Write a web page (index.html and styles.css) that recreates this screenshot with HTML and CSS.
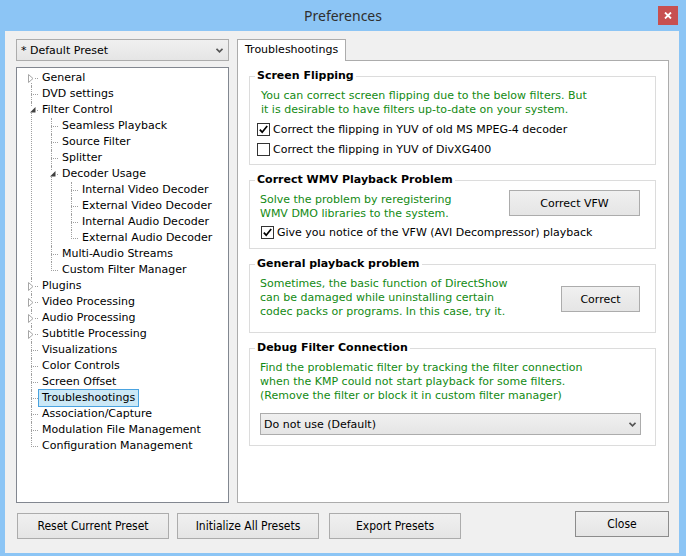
FILE: index.html
```html
<!DOCTYPE html>
<html>
<head>
<meta charset="utf-8">
<title>Preferences</title>
<link rel="stylesheet" href="styles.css">
</head>
<body>
<div class="window">
  <div class="titlebar">
    <span class="title">Preferences</span>
    <div class="close-x">
      <svg width="8" height="7" viewBox="0 0 8 7"><path d="M1 0.5 L7 6.5 M7 0.5 L1 6.5" stroke="#fff" stroke-width="1.8" fill="none"/></svg>
    </div>
  </div>
  <div class="client">
    <div class="main">
      <div class="left">
        <div class="combo">
          <span>* Default Preset</span>
          <svg class="chev" width="7" height="5" viewBox="0 0 7 5"><path d="M0.5 0.8 L3.5 3.8 L6.5 0.8" stroke="#555" stroke-width="1.7" fill="none"/></svg>
        </div>
        <div class="tree">
          <ul>
            <li><div class="row"><span class="exp col"><svg width="6" height="9" viewBox="0 0 6 9"><path d="M0.5 0.5 L5 4.5 L0.5 8.5 Z" stroke="#a6a6a6" fill="#fff"/></svg></span><span class="lbl">General</span></div></li>
            <li><div class="row"><span class="lbl">DVD settings</span></div></li>
            <li><div class="row"><span class="exp ex"><svg width="6" height="6" viewBox="0 0 6 6"><path d="M5.5 0 L5.5 5.5 L0 5.5 Z" fill="#404040"/></svg></span><span class="lbl">Filter Control</span></div>
              <ul>
                <li><div class="row"><span class="lbl">Seamless Playback</span></div></li>
                <li><div class="row"><span class="lbl">Source Filter</span></div></li>
                <li><div class="row"><span class="lbl">Splitter</span></div></li>
                <li><div class="row"><span class="exp ex"><svg width="6" height="6" viewBox="0 0 6 6"><path d="M5.5 0 L5.5 5.5 L0 5.5 Z" fill="#404040"/></svg></span><span class="lbl">Decoder Usage</span></div>
                  <ul>
                    <li><div class="row"><span class="lbl">Internal Video Decoder</span></div></li>
                    <li><div class="row"><span class="lbl">External Video Decoder</span></div></li>
                    <li><div class="row"><span class="lbl">Internal Audio Decoder</span></div></li>
                    <li><div class="row"><span class="lbl">External Audio Decoder</span></div></li>
                  </ul>
                </li>
                <li><div class="row"><span class="lbl">Multi-Audio Streams</span></div></li>
                <li><div class="row"><span class="lbl">Custom Filter Manager</span></div></li>
              </ul>
            </li>
            <li><div class="row"><span class="exp col"><svg width="6" height="9" viewBox="0 0 6 9"><path d="M0.5 0.5 L5 4.5 L0.5 8.5 Z" stroke="#a6a6a6" fill="#fff"/></svg></span><span class="lbl">Plugins</span></div></li>
            <li><div class="row"><span class="exp col"><svg width="6" height="9" viewBox="0 0 6 9"><path d="M0.5 0.5 L5 4.5 L0.5 8.5 Z" stroke="#a6a6a6" fill="#fff"/></svg></span><span class="lbl">Video Processing</span></div></li>
            <li><div class="row"><span class="exp col"><svg width="6" height="9" viewBox="0 0 6 9"><path d="M0.5 0.5 L5 4.5 L0.5 8.5 Z" stroke="#a6a6a6" fill="#fff"/></svg></span><span class="lbl">Audio Processing</span></div></li>
            <li><div class="row"><span class="exp col"><svg width="6" height="9" viewBox="0 0 6 9"><path d="M0.5 0.5 L5 4.5 L0.5 8.5 Z" stroke="#a6a6a6" fill="#fff"/></svg></span><span class="lbl">Subtitle Processing</span></div></li>
            <li><div class="row"><span class="lbl">Visualizations</span></div></li>
            <li><div class="row"><span class="lbl">Color Controls</span></div></li>
            <li><div class="row"><span class="lbl">Screen Offset</span></div></li>
            <li><div class="row"><span class="lbl sel">Troubleshootings</span></div></li>
            <li><div class="row"><span class="lbl">Association/Capture</span></div></li>
            <li><div class="row"><span class="lbl">Modulation File Management</span></div></li>
            <li><div class="row"><span class="lbl">Configuration Management</span></div></li>
          </ul>
        </div>
      </div>
      <div class="right">
        <div class="tabs"><div class="tab">Troubleshootings</div></div>
        <div class="panel">
          <div class="group g1">
            <div class="gtitle">Screen Flipping</div>
            <div class="green t1">You can correct screen flipping due to the below filters. But<br>it is desirable to have filters up-to-date on your system.</div>
            <div class="check c1"><span class="box on"><svg width="11" height="11" viewBox="0 0 11 11"><path d="M1.8 5.6 L4.2 8.2 L9.2 2" stroke="#000" stroke-width="1.7" fill="none"/></svg></span><span>Correct the flipping in YUV of old MS MPEG-4 decoder</span></div>
            <div class="check c1"><span class="box"></span><span>Correct the flipping in YUV of DivXG400</span></div>
          </div>
          <div class="group g2">
            <div class="gtitle">Correct WMV Playback Problem</div>
            <div class="grow top">
              <div class="green t2">Solve the problem by reregistering<br>WMV DMO libraries to the system.</div>
              <button class="btn vfw">Correct VFW</button>
            </div>
            <div class="check c2"><span class="box on"><svg width="11" height="11" viewBox="0 0 11 11"><path d="M1.8 5.6 L4.2 8.2 L9.2 2" stroke="#000" stroke-width="1.7" fill="none"/></svg></span><span>Give you notice of the VFW (AVI Decompressor) playback</span></div>
          </div>
          <div class="group g3">
            <div class="gtitle">General playback problem</div>
            <div class="grow mid">
              <div class="green t3">Sometimes, the basic function of DirectShow<br>can be damaged while uninstalling certain<br>codec packs or programs. In this case, try it.</div>
              <button class="btn corr">Correct</button>
            </div>
          </div>
          <div class="group g4">
            <div class="gtitle">Debug Filter Connection</div>
            <div class="green t3">Find the problematic filter by tracking the filter connection<br>when the KMP could not start playback for some filters.<br>(Remove the filter or block it in custom filter manager)</div>
            <div class="combo dd">
              <span>Do not use (Default)</span>
              <svg class="chev" width="7" height="5" viewBox="0 0 7 5"><path d="M0.5 0.8 L3.5 3.8 L6.5 0.8" stroke="#555" stroke-width="1.7" fill="none"/></svg>
            </div>
          </div>
        </div>
      </div>
    </div>
    <div class="footer">
      <button class="btn fb reset">Reset Current Preset</button>
      <button class="btn fb init">Initialize All Presets</button>
      <button class="btn fb export">Export Presets</button>
      <button class="btn fb closeb">Close</button>
    </div>
  </div>
</div>
</body>
</html>
```

FILE: styles.css
```css
html, body {
  margin: 0;
  padding: 0;
}
body {
  width: 686px;
  height: 556px;
  overflow: hidden;
  background: #8cc5f5;
  font-family: "DejaVu Sans", "Liberation Sans", sans-serif;
  font-size: 11px;
  color: #000;
}
.window {
  display: flex;
  flex-direction: column;
  height: 556px;
}
.titlebar {
  height: 31px;
  display: grid;
  grid-template-columns: 1fr auto 1fr;
  align-items: start;
}
.title {
  grid-column: 2;
  font-family: "Noto Sans", "Open Sans", sans-serif;
  font-size: 14px;
  line-height: 31px;
  color: #2f2f2f;
}
.close-x {
  grid-column: 3;
  justify-self: end;
  margin: 6px 8px 0 0;
  width: 20px;
  height: 19px;
  background: #c75050;
  display: flex;
  align-items: center;
  justify-content: center;
}
.close-x svg { display: block; }
.client {
  flex: 1;
  margin: 0 7px 3px 5px;
  background: #f0f0f0;
  padding: 8px 10px 0 11px;
  display: flex;
  flex-direction: column;
}
.main {
  display: flex;
  gap: 8px;
  height: 464px;
}
.left {
  width: 213px;
  display: flex;
  flex-direction: column;
  gap: 6px;
}
.combo {
  box-sizing: border-box;
  height: 22px;
  border: 1px solid #acacac;
  background: linear-gradient(#f0f0f0, #e5e5e5);
  display: flex;
  align-items: center;
  justify-content: space-between;
  padding: 0 5px 0 4px;
}
.chev { display: block; margin-top: 1px; }
.tree {
  box-sizing: border-box;
  height: 436px;
  border: 1px solid #828790;
  background: #fff;
  padding-top: 2px;
  overflow: hidden;
}
.tree ul {
  list-style: none;
  margin: 0;
  padding: 0;
}
.tree li {
  position: relative;
  padding-left: 21px;
}
.tree li ul {
  margin-left: -1px;
}
.tree li::before {
  content: "";
  position: absolute;
  left: 14px;
  top: 0;
  bottom: 0;
  border-left: 1px dotted #a0a0a0;
}
.tree li:last-child::before {
  bottom: auto;
  height: 9px;
}
.tree > ul > li:first-child::before {
  top: 8px;
}
.row {
  position: relative;
  height: 16px;
  display: flex;
  align-items: center;
}
.row::before {
  content: "";
  position: absolute;
  left: -7px;
  top: 8px;
  width: 7px;
  border-top: 1px dotted #a0a0a0;
}
.lbl {
  box-sizing: border-box;
  height: 18px;
  line-height: 16px;
  padding: 0 3px;
  border: 1px solid transparent;
  white-space: nowrap;
}
.lbl.sel {
  background: #cbe8f6;
  border-color: #4aa3e0;
}
.exp {
  position: absolute;
  z-index: 1;
  background: #fff;
  line-height: 0;
}
.exp svg { display: block; }
.exp.col {
  left: -10px;
  top: 4px;
}
.exp.ex {
  left: -8px;
  top: 5px;
}
.right {
  width: 432px;
  display: flex;
  flex-direction: column;
}
.tabs {
  display: flex;
}
.tab {
  position: relative;
  z-index: 1;
  box-sizing: border-box;
  height: 22px;
  margin-bottom: -1px;
  border: 1px solid #acacac;
  border-bottom: none;
  background: #fff;
  padding: 0 7px;
  line-height: 20px;
}
.panel {
  flex: 1;
  border: 1px solid #acacac;
  background: #fff;
  padding: 0 12px 0 11px;
}
.group {
  border: 1px solid #dcdcdc;
  margin-top: 15px;
  padding: 0 15px 0 10px;
}
.gtitle {
  display: table;
  margin: -8px 0 0 -5px;
  padding: 0 2px;
  background: #fff;
  font-weight: bold;
  line-height: 14px;
}
.green {
  color: #138a13;
  line-height: 14px;
  white-space: nowrap;
}
.t1 { margin: 6px 0 0 1px; }
.t2 { margin-top: 3px; }
.t3 { margin-top: 6px; }
.check {
  display: flex;
  align-items: center;
  height: 20px;
  gap: 3px;
  white-space: nowrap;
}
.c1 { margin-left: -3px; }
.g1 { padding-bottom: 5px; }
.g1 .green + .check { margin-top: 2px; }
.c2 { margin: 1px 0 0 1px; }
.g2 { padding-bottom: 6px; }
.g3 { padding-bottom: 13px; }
.g4 { padding-bottom: 10px; }
.box {
  box-sizing: border-box;
  width: 13px;
  height: 13px;
  border: 1px solid #333;
  background: #fff;
  display: flex;
  align-items: center;
  justify-content: center;
}
.box svg { display: block; }
.grow {
  display: flex;
  justify-content: space-between;
}
.grow.top {
  align-items: flex-start;
  margin-top: 3px;
}
.grow.mid {
  align-items: center;
}
.btn {
  box-sizing: border-box;
  height: 26px;
  border: 1px solid #acacac;
  background: linear-gradient(#f0f0f0, #e5e5e5);
  font-family: "DejaVu Sans", sans-serif;
  font-size: 11px;
  color: #000;
  padding: 0;
  margin: 0;
}
.vfw { width: 131px; }
.corr { width: 79px; margin-top: 8px; }
.dd {
  margin: 10px -1px 0 0;
  padding: 0 4px 0 3px;
}
.footer {
  display: flex;
  align-items: flex-start;
  margin-top: 8px;
  padding-left: 1px;
}
.fb {
  font-family: "DejaVu Sans Condensed", "DejaVu Sans", sans-serif;
  font-size: 12px;
  margin-top: 2px;
}
.reset { width: 152px; }
.init { width: 142px; margin-left: 8px; }
.export { width: 132px; margin-left: 10px; }
.closeb {
  width: 94px;
  margin-left: auto;
  margin-top: 0;
  border-color: #8c8c8c;
}
```
